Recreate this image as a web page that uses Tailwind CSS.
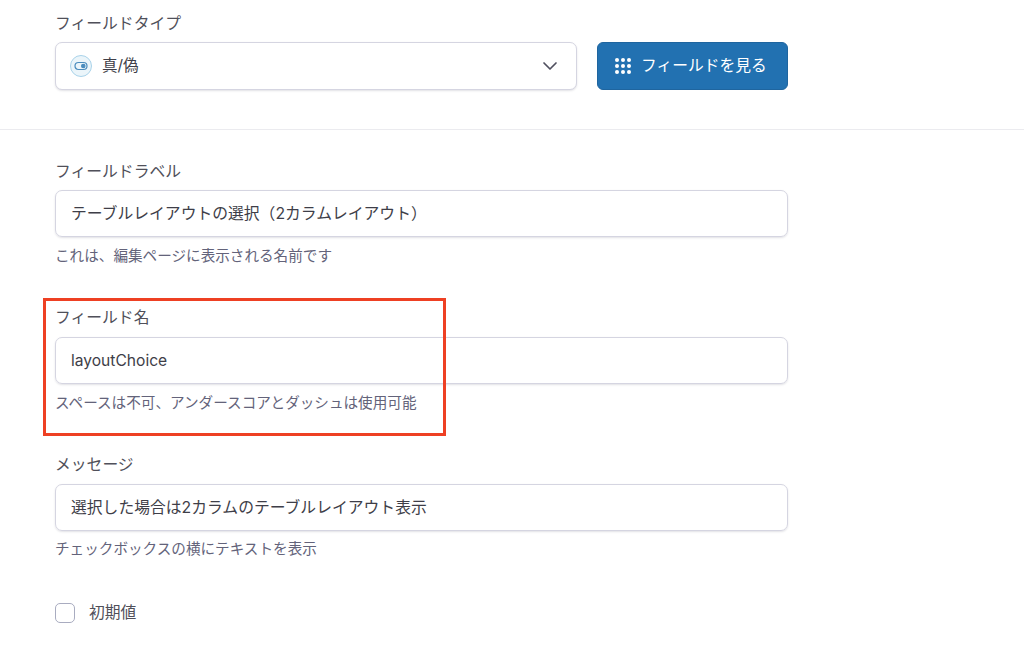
<!DOCTYPE html>
<html lang="ja">
<head>
  <meta charset="UTF-8">
  <title>フィールド設定</title>
  <script src="https://cdn.jsdelivr.net/npm/@tailwindcss/browser@4"></script>
</head>
<body class="bg-white text-[#3c434a] overflow-hidden font-['Inter','Noto_Sans_CJK_JP',sans-serif]">
  <div class="relative w-[1024px] h-[646px] overflow-hidden">

    <!-- Field type -->
    <section class="h-[130px] pl-[55px] pt-[13px] border-b border-[#ebebef]">
      <label class="block text-[15.8px] leading-[22px] mb-[7px] text-[#50505a]">フィールドタイプ</label>
      <div class="flex gap-[20px]">
        <div class="w-[522px] h-[48px] flex items-center pl-[15px] pr-[18px] bg-white border border-[#d5d5e1] rounded-[7px] shadow-[0_1px_2px_rgba(60,60,90,0.15)]">
          <span class="w-[22px] h-[22px] rounded-full bg-[#ebf5fa] border border-[#a9d3ea] flex items-center justify-center mr-[10px] -ml-px">
            <svg width="14" height="10" viewBox="0 0 14 10" fill="none" stroke="#4a8cbd" stroke-width="1.2"><rect x="1" y="1.5" width="12" height="7" rx="3.5"/><circle cx="9.3" cy="5" r="1.7" fill="#4a8cbd"/></svg>
          </span>
          <span class="text-[15.5px] text-[#3e3e48]">真/偽</span>
          <svg class="ml-auto" width="16" height="10" viewBox="0 0 16 10" fill="none" stroke="#50505f" stroke-width="1.7" stroke-linecap="round" stroke-linejoin="round"><path d="M2 2l6 6 6-6"/></svg>
        </div>
        <button class="w-[191px] h-[48px] flex items-center pl-[16px] bg-[#2271b1] border border-[#1f659f] rounded-[6px] text-white text-[15.75px]">
          <svg class="mr-[9px]" width="18" height="18" viewBox="0 0 18 18" fill="#ffffff"><circle cx="3" cy="3" r="2"/><circle cx="9" cy="3" r="2"/><circle cx="15" cy="3" r="2"/><circle cx="3" cy="9" r="2"/><circle cx="9" cy="9" r="2"/><circle cx="15" cy="9" r="2"/><circle cx="3" cy="15" r="2"/><circle cx="9" cy="15" r="2"/><circle cx="15" cy="15" r="2"/></svg>
          フィールドを見る
        </button>
      </div>
    </section>

    <!-- Text fields -->
    <div class="pl-[55px] pt-[31px] w-[788px] box-content">
      <div class="h-[146px]">
        <label class="block text-[15.8px] leading-[22px] mb-[7px] text-[#50505a]">フィールドラベル</label>
        <div class="w-[733px] h-[47px] flex items-center pl-[15px] pt-[1px] border border-[#d5d5e1] rounded-[7px] shadow-[0_1px_2px_rgba(60,60,90,0.15)] text-[15.8px] text-[#3e3e48]">テーブルレイアウトの選択（2カラムレイアウト）</div>
        <p class="mt-[9px] text-[14.6px] leading-[20px] text-[#63637a]">これは、編集ページに表示される名前です</p>
      </div>
      <div class="h-[147px]">
        <label class="block text-[15.8px] leading-[22px] mb-[8px] text-[#50505a]">フィールド名</label>
        <div class="w-[733px] h-[47px] flex items-center pl-[15px] pt-[1px] border border-[#d5d5e1] rounded-[7px] shadow-[0_1px_2px_rgba(60,60,90,0.15)] text-[15.6px] text-[#3e3e48]">layoutChoice</div>
        <p class="mt-[9px] text-[14.6px] leading-[20px] text-[#63637a]">スペースは不可、アンダースコアとダッシュは使用可能</p>
      </div>
      <div class="h-[149px]">
        <label class="block text-[15.8px] leading-[22px] mb-[8px] text-[#50505a]">メッセージ</label>
        <div class="w-[733px] h-[47px] flex items-center pl-[15px] pt-[1px] border border-[#d5d5e1] rounded-[7px] shadow-[0_1px_2px_rgba(60,60,90,0.15)] text-[15.8px] text-[#3e3e48]">選択した場合は2カラムのテーブルレイアウト表示</div>
        <p class="mt-[8px] text-[14.6px] leading-[20px] text-[#63637a]">チェックボックスの横にテキストを表示</p>
      </div>
      <div class="flex items-center h-[20px]">
        <span class="w-[20px] h-[20px] border border-[#a9acc0] rounded-[5px] mr-[14px]"></span>
        <span class="text-[15.8px] text-[#50505a]">初期値</span>
      </div>
    </div>

    <!-- Red annotation frame -->
    <div class="absolute left-[43px] top-[298px] w-[403px] h-[138px] border-[3px] border-[#ee4023]"></div>
  </div>
</body>
</html>
